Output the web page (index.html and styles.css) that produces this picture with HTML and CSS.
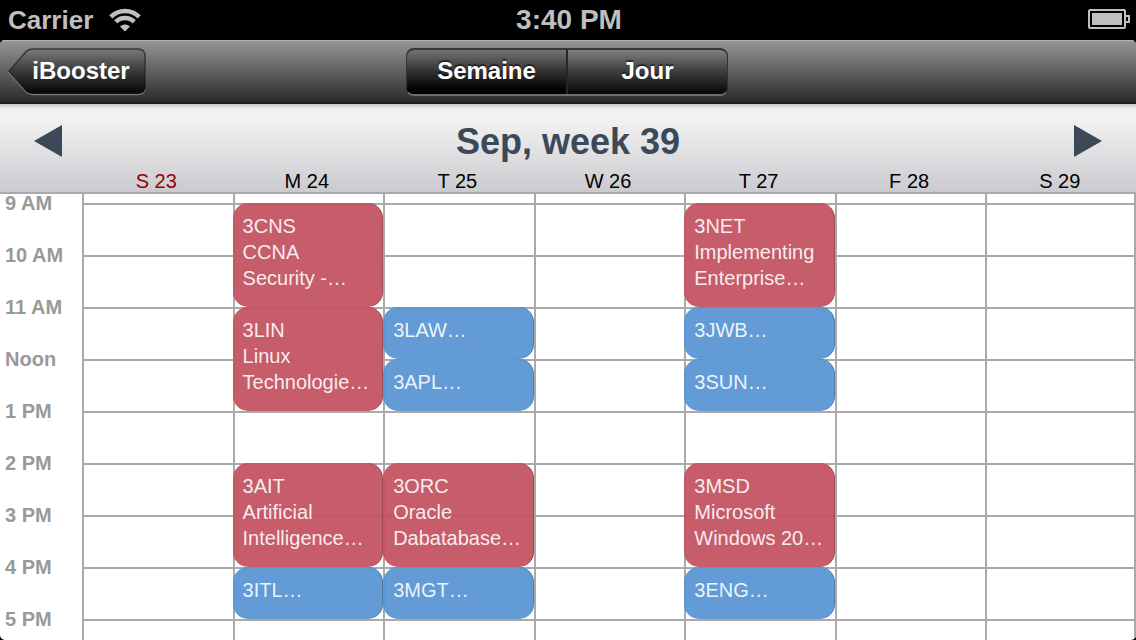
FILE: index.html
```html
<!DOCTYPE html>
<html lang="fr">
<head>
<meta charset="utf-8">
<meta name="viewport" content="width=device-width, initial-scale=1">
<title>iBooster</title>
<link rel="stylesheet" href="styles.css">
</head>
<body>
<div class="statusbar">
  <div class="carrier">
    <span>Carrier</span>
    <svg width="32" height="24" viewBox="0 0 32 24" aria-hidden="true">
      <g fill="none" stroke="#bfbfbf" stroke-width="4.500">
        <path d="M1.800 8.900A20 20 0 0 1 30.200 8.900"/>
        <path d="M6.800 13.800A13 13 0 0 1 25.200 13.800"/>
      </g>
      <path d="M16 23.500L11 18.500A7 7 0 0 1 21 18.500Z" fill="#bfbfbf"/>
    </svg>
  </div>
  <time class="clock">3:40 PM</time>
  <div class="battery">
    <svg width="42" height="20" viewBox="0 0 42 20" aria-hidden="true">
      <rect x="1" y="1" width="36" height="18" rx="1" fill="none" stroke="#bfbfbf" stroke-width="2"/>
      <rect x="4" y="4" width="30" height="12" fill="#bfbfbf"/>
      <path d="M38 7H41V13H38" fill="none" stroke="#bfbfbf" stroke-width="2"/>
    </svg>
  </div>
</div>
<div class="app">
  <nav class="navbar">
    <div class="nav-side">
      <button class="back" type="button">
        <svg class="back-shape" width="138" height="48" viewBox="0 0 138 48" aria-hidden="true">
          <defs>
            <linearGradient id="back-fill" x1="0" y1="0" x2="0" y2="1">
              <stop offset="0" stop-color="#7a7a7a"/>
              <stop offset=".5" stop-color="#3a3a3a"/>
              <stop offset="1" stop-color="#060606"/>
            </linearGradient>
            <linearGradient id="back-edge" x1="0" y1="0" x2="0" y2="1">
              <stop offset="0" stop-color="#383838"/>
              <stop offset=".5" stop-color="#2c2c2c"/>
              <stop offset="1" stop-color="#080808"/>
            </linearGradient>
          </defs>
          <path d="M19 2H130Q137 2 137 9V39Q137 46.500 130 46.500H26Q20 46.500 16.500 42L1 24.500L15 5.500Q18 2 22 2Z" fill="none" stroke="#777" stroke-width="1.500"/>
          <path d="M25 1H130Q137 1 137 8V38Q137 45 130 45H25Q20 45 17 41L1 23L17 5Q20 1 25 1Z" fill="url(#back-fill)" stroke="url(#back-edge)" stroke-width="1.500"/>
        </svg>
        <span class="back-label">iBooster</span>
      </button>
    </div>
    <div class="segments">
      <button class="segment segment-active" type="button">Semaine</button>
      <button class="segment" type="button">Jour</button>
    </div>
    <div class="nav-side"></div>
  </nav>
  <header class="week-header">
    <div class="week-title">
      <button class="arrow" type="button" aria-label="Previous week"><svg width="28" height="32" viewBox="0 0 28 32"><path d="M28 0V32L0 16Z" fill="#3c4959"/></svg></button>
      <h1>Sep, week 39</h1>
      <button class="arrow" type="button" aria-label="Next week"><svg width="28" height="32" viewBox="0 0 28 32"><path d="M0 0V32L28 16Z" fill="#3c4959"/></svg></button>
    </div>
    <div class="columns day-names">
      <span></span>
      <span class="sunday">S 23</span><span>M 24</span><span>T 25</span><span>W 26</span><span>T 27</span><span>F 28</span><span>S 29</span>
    </div>
  </header>
  <main class="schedule">
    <div class="columns">
      <div class="hours">
        <span>9 AM</span><span>10 AM</span><span>11 AM</span><span>Noon</span><span>1 PM</span><span>2 PM</span><span>3 PM</span><span>4 PM</span><span>5 PM</span>
      </div>
      <div class="day"></div>
      <div class="day">
        <div class="event red at-9 two-hours">3CNS<br>CCNA<br>Security -…</div>
        <div class="event red at-11 two-hours">3LIN<br>Linux<br>Technologie…</div>
        <div class="event red at-14 two-hours">3AIT<br>Artificial<br>Intelligence…</div>
        <div class="event blue at-16">3ITL…</div>
      </div>
      <div class="day">
        <div class="event blue at-11">3LAW…</div>
        <div class="event blue at-12">3APL…</div>
        <div class="event red at-14 two-hours">3ORC<br>Oracle<br>Dabatabase…</div>
        <div class="event blue at-16">3MGT…</div>
      </div>
      <div class="day"></div>
      <div class="day">
        <div class="event red at-9 two-hours">3NET<br>Implementing<br>Enterprise…</div>
        <div class="event blue at-11">3JWB…</div>
        <div class="event blue at-12">3SUN…</div>
        <div class="event red at-14 two-hours">3MSD<br>Microsoft<br>Windows 20…</div>
        <div class="event blue at-16">3ENG…</div>
      </div>
      <div class="day"></div>
      <div class="day day-last"></div>
    </div>
  </main>
</div>
</body>
</html>
```
FILE: styles.css
```css
* { box-sizing: border-box; }

body {
  margin: 0;
  height: 100vh;
  display: flex;
  flex-direction: column;
  background: #000;
  font-family: "Liberation Sans", Arial, sans-serif;
}

button {
  margin: 0;
  padding: 0;
  border: 0;
  background: none;
  font: inherit;
  color: inherit;
}

svg { display: block; }

/* Status bar */
.statusbar {
  flex: none;
  height: 40px;
  padding: 0 6px 0 8px;
  display: grid;
  grid-template-columns: 1fr auto 1fr;
  align-items: center;
  color: #bfbfbf;
  font-size: 26px;
  font-weight: bold;
}
.carrier { display: flex; align-items: center; gap: 16px; }
.clock { font-size: 28px; }
.battery { justify-self: end; padding-bottom: 2px; }

.app {
  flex: 1;
  min-height: 0;
  display: flex;
  flex-direction: column;
  overflow: hidden;
  border-radius: 5px;
  background: #fff;
}

/* Navigation bar */
.navbar {
  flex: none;
  height: 64px;
  padding: 0 10px 0 8px;
  display: grid;
  grid-template-columns: 1fr 322px 1fr;
  align-items: center;
  background: linear-gradient(#959595, #2b2b2b);
  border-top: 1px solid #b5b5b5;
  border-bottom: 2px solid #1d1b1d;
  color: #fff;
  font-size: 24px;
  font-weight: bold;
  text-shadow: 0 -2px 1px rgba(0, 0, 0, .5);
}
.back {
  position: relative;
  display: block;
  width: 138px;
  height: 48px;
  padding: 0 16px 2px 24px;
}
.back-shape { position: absolute; inset: 0; }
.back-label { position: relative; }
.segments {
  height: 48px;
  display: flex;
  border: 1px solid;
  border-width: 2px 1px;
  border-color: #363636 #333 #6d6d6d;
  border-radius: 8px;
  overflow: hidden;
  background: #000;
}
.segment {
  flex: 1;
  padding-bottom: 2px;
  background: linear-gradient(#808080, #414141 45%, #060606);
  text-shadow: inherit;
}
.segment-active {
  background: linear-gradient(#747474, #303030 50%, #000 90%);
  border-right: 2px solid #262626;
}

/* Week header */
.week-header {
  flex: none;
  height: 90px;
  display: flex;
  flex-direction: column;
  background: linear-gradient(#c6c6ca, #f0f0f1 5px, #f4f4f4 12px, #cbcacf);
  border-bottom: 2px solid #a6abb2;
}
.week-title {
  flex: 1;
  padding: 8px 34px 0;
  display: flex;
  align-items: center;
  justify-content: space-between;
}
.week-title h1 {
  margin: 0;
  padding-top: 2px;
  color: #3c4959;
  font-size: 36px;
  line-height: 40px;
}
.columns {
  display: grid;
  grid-template-columns: 82px repeat(7, 1fr);
}
.day-names {
  font-size: 20px;
  line-height: 22px;
  text-align: center;
}
.day-names span { padding-right: 2px; }
.sunday { color: #990006; }

/* Schedule */
.schedule {
  flex: 1;
  min-height: 0;
  overflow-y: auto;
  scrollbar-width: none;
}
.hours {
  padding-left: 5px;
  display: grid;
  grid-auto-rows: 18px;
  align-content: start;
  row-gap: 34px;
  color: #999;
  font-size: 20px;
  line-height: 18px;
  font-weight: bold;
}
.day {
  display: grid;
  grid-template-rows: 9px repeat(9, 52px);
  background:
    linear-gradient(#aaa, #aaa) 0 0 / 2px 100% no-repeat,
    repeating-linear-gradient(#aaa 0 2px, transparent 2px 52px) 0 9px no-repeat;
}
.day-last { border-right: 2px solid #aaa; }
.event {
  padding: 10px 0 0 10px;
  border-radius: 15px;
  box-shadow: inset -1px 0 rgba(0, 0, 0, .2);
  color: rgba(255, 255, 255, .9);
  font-size: 20px;
  line-height: 26px;
  white-space: nowrap;
  overflow: hidden;
}
.red { background: rgba(195, 83, 98, .94); }
.blue { background: rgba(88, 149, 211, .94); }
.at-9 { grid-row: 2; }
.at-11 { grid-row: 4; }
.at-12 { grid-row: 5; }
.at-14 { grid-row: 7; }
.at-16 { grid-row: 9; }
.two-hours { grid-row-end: span 2; }
```
